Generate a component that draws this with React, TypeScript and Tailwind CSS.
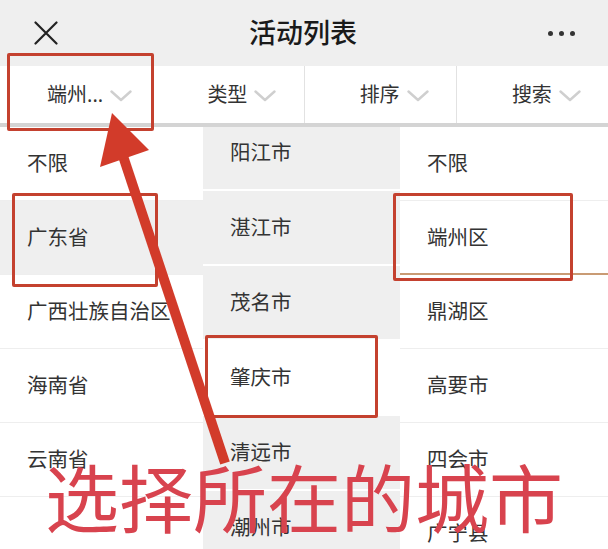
const provinces = ['不限', '广东省', '广西壮族自治区', '海南省', '云南省', ''];
const cities = ['阳江市', '湛江市', '茂名市', '肇庆市', '清远市', '潮州市'];
const districts = ['不限', '端州区', '鼎湖区', '高要市', '四会市', '广宁县'];
const tabs = ['端州...', '类型', '排序', '搜索'];

function Chevron() {
  return (
    <svg width="22" height="12" viewBox="0 0 22 12" fill="none" className="ml-[7px] mt-[2px]">
      <path d="M1.5 1.5 L11 10 L20.5 1.5" stroke="#cfcfcf" strokeWidth="2.4" strokeLinecap="round" strokeLinejoin="round" />
    </svg>
  );
}

function CloseIcon() {
  return (
    <svg width="24" height="24" viewBox="0 0 24 24" fill="none">
      <path d="M1.5 1.5 L22.5 22.5 M22.5 1.5 L1.5 22.5" stroke="#222" strokeWidth="2.2" strokeLinecap="round" />
    </svg>
  );
}

function Box({ className }: { className: string }) {
  return <div className={`pointer-events-none absolute rounded-[2px] border-[3px] border-[#c4412f] ${className}`} />;
}

export default function App() {
  return (
    <div
      className="relative h-[549px] w-[608px] overflow-hidden bg-white text-[#333]"
      style={{ fontFamily: '"Noto Sans", "Noto Sans CJK SC", sans-serif' }}
    >
      {/* title bar */}
      <div className="flex h-[66px] items-center justify-between bg-[#efefef] pl-[34px] pr-[33px]">
        <CloseIcon />
        <div className="text-[27px] font-medium text-[#1a1a1a]">活动列表</div>
        <div className="flex items-center gap-[6px]">
          <span className="h-[5px] w-[5px] rounded-full bg-[#333]" />
          <span className="h-[5px] w-[5px] rounded-full bg-[#333]" />
          <span className="h-[5px] w-[5px] rounded-full bg-[#333]" />
        </div>
      </div>

      {/* filter tabs */}
      <div className="flex h-[61px] border-b-4 border-[#d4d4d4] bg-white">
        {tabs.map((t, i) => (
          <div
            key={t}
            className={`flex flex-1 items-center justify-center pl-[28px] ${i < 3 ? 'border-r border-[#e2e2e2]' : ''}`}
          >
            <span className="text-[20px] leading-none text-[#333]">{t}</span>
            <Chevron />
          </div>
        ))}
      </div>

      {/* lists */}
      <div className="flex h-[422px]">
        <div className="w-[203px] overflow-hidden">
          {provinces.map((p, i) => (
            <div
              key={i}
              className={`flex h-[74px] items-center whitespace-nowrap border-b border-[#eeeeee] pl-[27px] text-[20.5px] ${
                i === 1 ? 'bg-[#efefef]' : 'bg-white'
              }`}
            >
              {p}
            </div>
          ))}
        </div>
        <div className="w-[197px] overflow-hidden bg-[#efefef]">
          <div className="-mt-[11px]">
            {cities.map((c, i) => (
              <div
                key={c}
                className={`flex h-[75px] items-center border-b-2 border-white pl-[27px] text-[20.5px] ${
                  i === 3 ? 'bg-white' : ''
                }`}
              >
                {c}
              </div>
            ))}
          </div>
        </div>
        <div className="flex-1 overflow-hidden">
          {districts.map((d, i) => (
            <div
              key={d + i}
              className={`flex h-[74px] items-center pl-[27px] text-[20.5px] ${
                i === 1 ? 'border-b-2 border-[#c99b74]' : 'border-b border-[#eeeeee]'
              }`}
            >
              {d}
            </div>
          ))}
        </div>
      </div>

      {/* annotations */}
      <Box className="left-[7px] top-[53px] h-[78px] w-[147px]" />
      <Box className="left-[12px] top-[193px] h-[94px] w-[146px]" />
      <Box className="left-[393px] top-[193px] h-[88px] w-[180px]" />
      <Box className="left-[205px] top-[335px] h-[83px] w-[173px]" />

      <svg className="pointer-events-none absolute inset-0" width="608" height="549" viewBox="0 0 608 549">
        <line x1="123" y1="156" x2="225" y2="463" stroke="#d23b2a" strokeWidth="10" />
        <polygon points="112,113 100,167 149,150" fill="#d23b2a" />
      </svg>

      <div className="pointer-events-none absolute left-0 right-0 top-[462px] text-center text-[74px] leading-none text-[#d8434e]">
        选择所在的城市
      </div>
    </div>
  );
}
